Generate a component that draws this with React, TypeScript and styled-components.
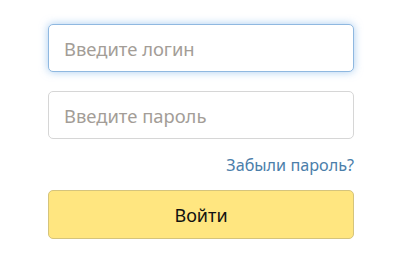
import React from "react";
import styled, { createGlobalStyle } from "styled-components";

const Global = createGlobalStyle`
  html, body { margin: 0; padding: 0; background: #fff; }
  body { font-family: "Noto Sans", "Open Sans", sans-serif; }
  * { box-sizing: border-box; }
`;

const Form = styled.form`
  width: 400px;
  padding: 24px 46px 0 48px;
  display: flex;
  flex-direction: column;
`;

const Input = styled.input<{ $focused?: boolean }>`
  width: 306px;
  height: 48px;
  padding: 0 15px;
  border: 1px solid ${(p) => (p.$focused ? "#8fb8e0" : "#d6d6d6")};
  border-radius: 5px;
  font-family: "Noto Sans", "Open Sans", sans-serif;
  font-size: 18.4px;
  color: #333;
  outline: none;
  box-shadow: ${(p) => (p.$focused ? "0 0 8px rgba(110, 170, 230, 0.6)" : "none")};
  &::placeholder { color: #a39d97; }
  & + & { margin-top: 19px; }
`;

const LinkRow = styled.div`
  display: flex;
  justify-content: flex-end;
  margin-top: 15px;
  height: 22px;
`;

const Forgot = styled.a`
  color: #4b7eaa;
  font-size: 16.2px;
  text-decoration: none;
  line-height: 22px;
`;

const Button = styled.button`
  margin-top: 14px;
  width: 306px;
  height: 49px;
  background: #ffe680;
  border: 1px solid #d5c47c;
  border-radius: 5px;
  font-family: "Noto Sans", "Open Sans", sans-serif;
  font-size: 18px;
  color: #111;
`;

export default function App() {
  return (
    <>
      <Global />
      <Form onSubmit={(e) => e.preventDefault()}>
        <Input $focused placeholder="Введите логин" />
        <Input type="password" placeholder="Введите пароль" />
        <LinkRow>
          <Forgot href="#">Забыли пароль?</Forgot>
        </LinkRow>
        <Button type="submit">Войти</Button>
      </Form>
    </>
  );
}
